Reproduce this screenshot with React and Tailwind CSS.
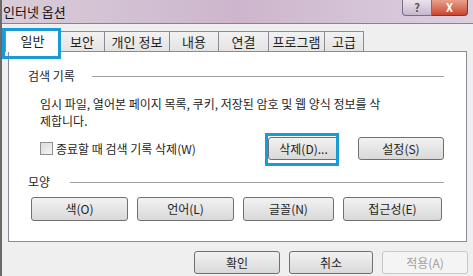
import React from 'react';

const font = { fontFamily: '"Noto Sans CJK KR", "Noto Sans", sans-serif' };

const Btn = ({ children, className = '', disabled = false }) => (
  <div
    className={`flex items-center justify-center rounded-[3px] border text-[12px] ${
      disabled
        ? 'border-[#c8c8c8] bg-[#f4f4f4] text-[#a0a0a0]'
        : 'border-[#707070] bg-gradient-to-b from-[#f2f2f2] to-[#d9d9d9] text-[#1e1e1e]'
    } ${className}`}
  >
    {children}
  </div>
);

const tabs = [
  { label: '보안', w: 'w-[45px]' },
  { label: '개인 정보', w: 'w-[65px]' },
  { label: '내용', w: 'w-[49px]' },
  { label: '연결', w: 'w-[50px]' },
  { label: '프로그램', w: 'w-[56px]' },
  { label: '고급', w: 'w-[39px]' },
];

const App = () => {
  return (
    <div
      className="flex h-[276px] w-[473px] flex-col overflow-hidden border-l-2 border-[#6a6a6a] bg-[#efefef] text-[#1e1e1e]"
      style={font}
    >
      {/* title bar */}
      <div className="relative flex h-[24px] shrink-0 items-center border-b border-[#8f7f95] bg-gradient-to-r from-[#d8cdd9] via-[#cdb6cd] to-[#dccfe0] pl-[1px]">
        <span className="text-[13px] text-[#111]">인터넷 옵션</span>
        <div className="absolute right-[5px] top-0 flex h-[16px]">
          <div className="flex w-[30px] items-center justify-center rounded-bl-[4px] border border-t-0 border-[#7a6f80] bg-gradient-to-b from-[#ebe3ee] to-[#c6b8cc] text-[11px] font-bold text-[#555]">
            ?
          </div>
          <div className="flex w-[36px] items-center justify-center rounded-br-[4px] border border-l-0 border-t-0 border-[#7a3a30] bg-gradient-to-b from-[#e8a08a] to-[#c8452e] text-[11px] font-bold text-white">
            X
          </div>
        </div>
      </div>

      {/* tabs */}
      <div className="relative mt-[3px] flex h-[24px] shrink-0 items-end pl-[3px]">
        <div className="relative z-10 -mb-px flex h-[24px] w-[55px] items-center justify-center border border-b-0 border-[#898c95] bg-white text-[13px]">
          일반
          <div className="absolute -left-[4px] -top-[1px] h-[31px] w-[59px] border-[3px] border-[#1a9ad6]" />
        </div>
        {tabs.map((t) => (
          <div
            key={t.label}
            className={`flex h-[20px] ${t.w} items-center justify-center border border-b-0 border-l-0 border-[#898c95] bg-gradient-to-b from-[#f2f2f2] to-[#e3e3e3] text-[13px]`}
          >
            {t.label}
          </div>
        ))}
      </div>

      {/* panel */}
      <div className="ml-[6px] flex h-[191px] w-[459px] shrink-0 flex-col border border-[#898c95] bg-white">
        <div className="mt-[15px] flex items-center pl-[19px] pr-[22px] text-[12px]">
          <span>검색 기록</span>
          <div className="ml-[17px] h-px flex-1 bg-[#a0a0a0]" />
        </div>
        <div className="mt-[10px] pl-[31px] pr-[20px] text-[12px] leading-[17px]">
          임시 파일, 열어본 페이지 목록, 쿠키, 저장된 암호 및 웹 양식 정보를 삭
          <br />
          제합니다.
        </div>
        <div className="mt-[8px] flex items-center pl-[31px] pr-[22px]">
          <div className="h-[13px] w-[13px] border border-[#8f8f8f] bg-gradient-to-br from-[#dcdcdc] to-[#f4f4f4]" />
          <span className="ml-[3px] text-[12px]">종료할 때 검색 기록 삭제(W)</span>
          <div className="flex-1" />
          <div className="relative">
            <Btn className="h-[23px] w-[71px]">삭제(D)...</Btn>
            <div className="absolute -left-[3px] -top-[4px] h-[33px] w-[74px] border-[3px] border-[#1a9ad6]" />
          </div>
          <Btn className="ml-[19px] h-[23px] w-[86px] border-[#3c7fb1]">설정(S)</Btn>
        </div>
        <div className="mt-[13px] flex items-center pl-[19px] pr-[22px] text-[12px]">
          <span>모양</span>
          <div className="ml-[20px] h-px flex-1 bg-[#a0a0a0]" />
        </div>
        <div className="mt-[6px] flex gap-[9px] pl-[22px]">
          <Btn className="h-[24px] w-[97px]">색(O)</Btn>
          <Btn className="h-[24px] w-[97px]">언어(L)</Btn>
          <Btn className="h-[24px] w-[91px]">글꼴(N)</Btn>
          <Btn className="h-[24px] w-[99px]">접근성(E)</Btn>
        </div>
      </div>

      {/* bottom buttons */}
      <div className="mt-[9px] flex gap-[9px] pl-[192px]">
        <Btn className="h-[23px] w-[86px]">확인</Btn>
        <Btn className="h-[23px] w-[84px]">취소</Btn>
        <Btn className="h-[23px] w-[86px]" disabled>
          적용(A)
        </Btn>
      </div>
    </div>
  );
};

export default App;
